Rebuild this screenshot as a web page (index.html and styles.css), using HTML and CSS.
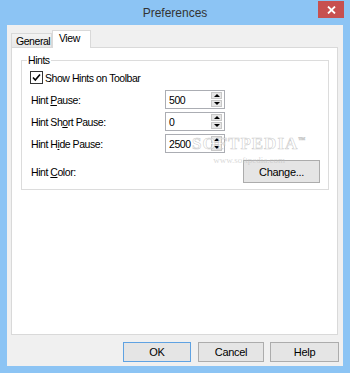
FILE: index.html
```html
<!DOCTYPE html>
<html lang="en">
<head>
  <meta charset="UTF-8">
  <title>Preferences</title>
  <link rel="stylesheet" href="styles.css">
</head>
<body>
  <div class="window">
    <div class="titlebar">
      <span></span>
      <span class="title">Preferences</span>
      <span class="close">
        <svg width="9" height="8" viewBox="0 0 9 8"><path d="M1 0.5 L8 7.5 M8 0.5 L1 7.5" stroke="#fff" stroke-width="1.8"/></svg>
      </span>
    </div>

    <div class="client">
      <div class="tabs">
        <div class="tab general">General</div>
        <div class="tab active">View</div>
      </div>

      <div class="panel">
        <fieldset class="group">
          <legend>Hints</legend>

          <label class="check">
            <span class="box">
              <svg width="11" height="11" viewBox="0 0 11 11"><path d="M2 5.5 L4.3 8 L9 2.5" fill="none" stroke="#000" stroke-width="1.6"/></svg>
            </span>
            Show Hints on Toolbar
          </label>

          <div class="row first">
            <span class="lbl">Hint <u>P</u>ause:</span>
            <span class="spin"><span class="val">500</span><span class="arrows"><span class="up"></span><span class="down"></span></span></span>
          </div>
          <div class="row">
            <span class="lbl">Hint Sh<u>o</u>rt Pause:</span>
            <span class="spin"><span class="val">0</span><span class="arrows"><span class="up"></span><span class="down"></span></span></span>
          </div>
          <div class="row">
            <span class="lbl">Hint H<u>i</u>de Pause:</span>
            <span class="spin"><span class="val">2500</span><span class="arrows"><span class="up"></span><span class="down"></span></span></span>
          </div>
          <div class="row color">
            <span class="lbl">Hint <u>C</u>olor:</span>
            <button class="btn change">Change...</button>
          </div>
        </fieldset>

        <div class="watermark">
          <span class="wm-big">SOFTPEDIA<sup>™</sup></span>
          <span class="wm-small">www.softpedia.com</span>
        </div>
      </div>

      <div class="buttons">
        <button class="btn ok">OK</button>
        <button class="btn cancel">Cancel</button>
        <button class="btn help">Help</button>
      </div>
    </div>
  </div>
</body>
</html>
```

FILE: styles.css
```css
body {
  margin: 0;
  font-family: "Liberation Sans", Arial, sans-serif;
  font-size: 10.5px;
  letter-spacing: -0.45px;
  color: #000;
}

.window {
  width: 350px;
  height: 373px;
  background-color: #8cc4f4;
  display: flex;
  flex-direction: column;
}

/* title bar */
.titlebar {
  height: 25px;
  display: grid;
  grid-template-columns: 1fr auto 1fr;
  align-items: start;
}

.title {
  font-size: 12px;
  letter-spacing: 0;
  line-height: 14px;
  padding-top: 6px;
  color: #333;
}

.close {
  justify-self: end;
  margin-right: 6px;
  margin-top: 1px;
  width: 26px;
  height: 17px;
  background-color: #c75050;
  display: flex;
  align-items: center;
  justify-content: center;
}

/* client area */
.client {
  flex: 1;
  margin: 0 7px 7px 7px;
  background-color: #f0f0f0;
  padding: 5px 5px 4px 4px;
  display: flex;
  flex-direction: column;
}

.tabs {
  display: flex;
  align-items: flex-end;
  height: 18px;
  margin-bottom: -1px;
  position: relative;
  z-index: 1;
}

.tab {
  box-sizing: border-box;
  height: 14px;
  line-height: 15px;
  margin-bottom: 1px;
  padding: 0 0 0 5px;
  border: 1px solid #d9d9d9;
  border-bottom: none;
  background: linear-gradient(#f3f3f3, #e8e8e8);
}

.tab.general {
  width: 41px;
  padding-left: 4px;
}

.tab.active {
  width: 39px;
  height: 18px;
  line-height: 15px;
  margin-bottom: 0;
  padding-left: 6px;
  background: #fff;
}

.panel {
  flex: 1;
  position: relative;
  background-color: #fff;
  border: 1px solid #d9d9d9;
  padding: 6px 8px 0 9px;
}

/* group box */
.group {
  margin: 0;
  border: 1px solid #dcdcdc;
  padding: 0 8px 6px 9px;
}

.group legend {
  padding: 0 1px;
  margin-left: -4px;
  line-height: 13px;
}

.check {
  display: flex;
  align-items: center;
  height: 13px;
  margin-top: 4px;
  margin-left: -1px;
}

.check .box {
  width: 11px;
  height: 11px;
  border: 1px solid #333;
  background: #fff;
  margin-right: 2px;
  display: flex;
}

.row {
  display: flex;
  align-items: center;
  height: 19px;
  margin-top: 3px;
}

.row.first {
  margin-top: 6px;
}

.row.color {
  height: 23px;
  margin-top: 7px;
}

.lbl {
  width: 134px;
}

.spin {
  width: 58px;
  height: 17px;
  border: 1px solid #abadb3;
  display: flex;
  align-items: center;
}

.spin .val {
  flex: 1;
  padding-left: 3px;
}

.arrows {
  width: 11px;
  height: 15px;
  margin-right: 2px;
  display: flex;
  flex-direction: column;
  gap: 1px;
}

.arrows span {
  flex: 1;
  background: #e6e6e6;
  border: 1px solid #c8c8c8;
  position: relative;
}

.arrows .up::after,
.arrows .down::after {
  content: "";
  position: absolute;
  left: 2px;
  border-left: 3px solid transparent;
  border-right: 3px solid transparent;
}

.arrows .up::after {
  top: 1px;
  border-bottom: 3px solid #000;
}

.arrows .down::after {
  top: 1px;
  border-top: 3px solid #000;
}

/* buttons */
.btn {
  font-family: inherit;
  font-size: 11px;
  letter-spacing: -0.3px;
  color: #000;
  background-color: #e5e5e5;
  border: 1px solid #acacac;
  padding: 0;
}

.change {
  margin-left: auto;
  width: 77px;
  height: 23px;
}

.buttons {
  display: flex;
  justify-content: flex-end;
  margin-top: 7px;
  margin-right: -1px;
  height: 20px;
}

.buttons .btn {
  height: 20px;
}

.ok {
  width: 68px;
  border-color: #5fa2e2;
}

.cancel {
  width: 66px;
  margin-left: 7px;
}

.help {
  width: 69px;
  margin-left: 6px;
}

/* watermark overlay */
.watermark {
  position: absolute;
  left: 180px;
  top: 86px;
  display: flex;
  flex-direction: column;
  align-items: center;
  pointer-events: none;
}

.wm-big {
  font-family: "Liberation Serif", serif;
  font-size: 17px;
  font-weight: bold;
  letter-spacing: 1px;
  color: rgba(255, 255, 255, 0.7);
  -webkit-text-stroke: 0.6px rgba(170, 170, 170, 0.6);
}

.wm-big sup {
  font-size: 7px;
}

.wm-small {
  font-family: "Liberation Serif", serif;
  font-size: 9px;
  letter-spacing: 0;
  color: rgba(190, 190, 190, 0.6);
  margin-top: 1px;
}
```
